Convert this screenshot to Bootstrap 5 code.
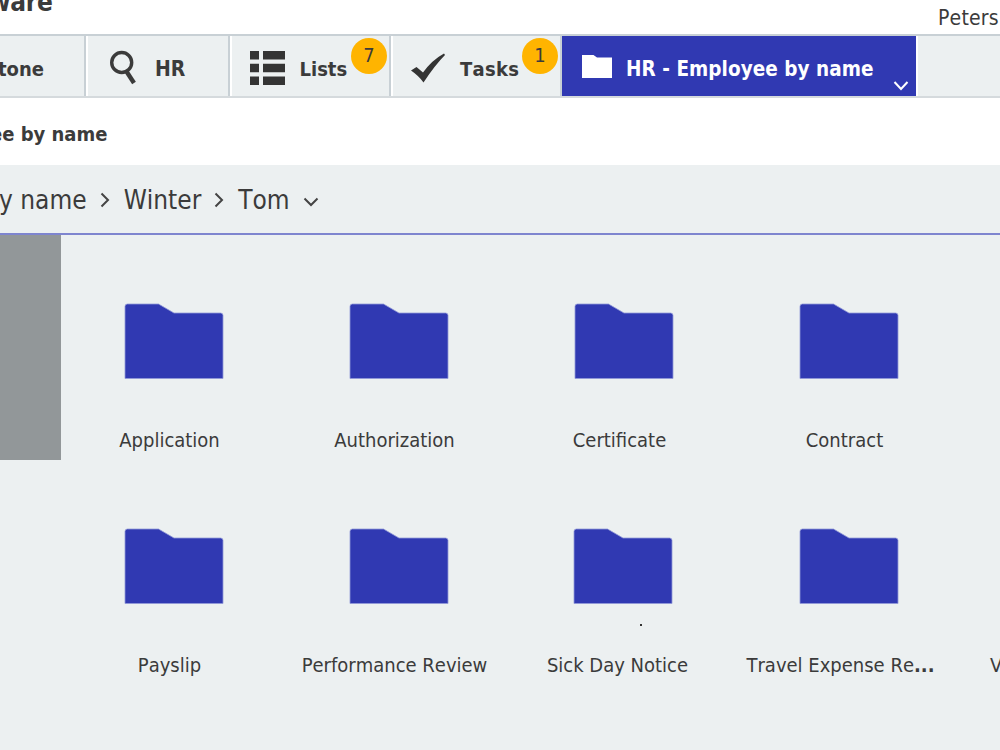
<!DOCTYPE html>
<html lang="en">
<head>
<meta charset="utf-8">
<title>HR - Employee by name</title>
<link href="https://cdn.jsdelivr.net/npm/bootstrap@5.3.0/dist/css/bootstrap.min.css" rel="stylesheet">
<style>
body{width:1000px;height:750px;overflow:hidden;background:#ecf0f1;color:#3b3b3b;font-family:"DejaVu Sans Condensed","DejaVu Sans",sans-serif;font-stretch:condensed;font-kerning:none;font-size:20px;line-height:24px;white-space:nowrap}
.masthead{height:36px;border-bottom:2px solid #c8d0d5}
.brand{font-size:26px;font-weight:700;margin:-10px 0 0 -11px;letter-spacing:-.3px}
.user{margin:6px 0 0;font-size:21px;width:62px;letter-spacing:.2px}
.tabs{height:62px;border-bottom:2px solid #d5dadd}
.tab{height:60px;border-right:2px solid #c8d0d5;border-left:2px solid #fff;font-weight:700}
.tab svg,.tile svg,.path svg{display:block;flex:none}
.tab .t,.tab-on .t{position:relative;top:3px}
.tab-on .t{font-size:20.500px;letter-spacing:.05px}
.count{position:absolute;right:2px;top:2px;width:36px;height:36px;line-height:35px;border-radius:50%;background:#ffb400;font-weight:400;text-align:center}
.tab-on{background:#3039b2;color:#fff;width:354px;height:60px;font-weight:700}
.page-title{height:67px;font-weight:700;padding-top:24px}
.path{height:70px;border-bottom:2px solid #7e85cf;font-size:26px;line-height:32px}
.path span{padding-top:2px}
.side{width:61px;height:225px;background:#929799;flex:none}
.tiles{display:grid;grid-template-columns:repeat(4,225px) 1fr;grid-auto-rows:225px;margin-left:-4px;width:943px;overflow:hidden}
.tile{position:relative;padding-top:68px}
.tile svg{margin:0 0 49px 67px}
.tile .t{width:225px;text-align:center}
.speck{position:absolute;left:133px;top:164px;width:2px;height:2px;background:#333}
</style>
</head>
<body>
<svg width="0" height="0" class="position-absolute"><defs>
<symbol id="folder" viewBox="0 0 100 76"><path d="M1 75.500V3.500Q1 1 3.500 1H34.500L50 10H96.500Q99 10 99 12.500V75.500Z" fill="#3039b2" stroke="#9299d8" stroke-width=".8"/></symbol>
</defs></svg>
<header class="masthead bg-white d-flex justify-content-between">
<div class="brand">ware</div><div class="user">Peters</div>
</header>
<nav class="tabs d-flex">
<div class="tab d-flex align-items-center border-start-0" style="width:86px"><span class="t" style="margin-left:-2px">tone</span></div>
<div class="tab d-flex align-items-center" style="width:144px">
<svg width="30" height="36" style="margin:2px 0 0 20px" viewBox="0 0 30 36" fill="none" stroke="#3b3b3b"><circle cx="13.700" cy="13.500" r="10" stroke-width="3.400"/><path d="M18.500 22.500L26 34" stroke-width="4.400"/></svg>
<span class="t" style="margin-left:17px;font-size:21px">HR</span></div>
<div class="tab d-flex align-items-center position-relative" style="width:161px">
<svg width="35" height="34" style="margin:4px 0 0 17.500px" viewBox="0 0 35 34" fill="#343434"><path d="M0 0h9v8.500H0zM13 0h22v8.500H13zM0 12.700h9v8.500H0zM13 12.700h22v8.500H13zM0 25.400h9v8.500H0zM13 25.400h22v8.500H13z"/></svg>
<span class="t" style="margin-left:15px">Lists</span><span class="count">7</span></div>
<div class="tab d-flex align-items-center position-relative" style="width:171px">
<svg width="35" height="30" style="margin:4px 0 0 18px" viewBox="0 0 35 30" fill="#343434"><path d="M0 17.500L5.500 14L12 19.500Q21 7 33 .5L34 2Q24 12 12.500 29.500Q8 23 0 17.500Z"/></svg>
<span class="t" style="margin-left:14px;letter-spacing:.3px">Tasks</span><span class="count">1</span></div>
<div class="tab-on d-flex align-items-center position-relative">
<svg width="30" height="23" style="margin:1px 0 0 20px" viewBox="0 0 30 23" fill="#fff"><path d="M0 0H11.500L15 2.500H30V23H0Z"/></svg>
<span class="t" style="margin-left:14px">HR - Employee by name</span>
<svg class="position-absolute" style="right:7px;bottom:4px" width="16" height="12" viewBox="0 0 16 12" fill="none" stroke="#fff" stroke-width="2"><path d="M1.500 2L8 9L14.500 2"/></svg></div>
<div class="tab flex-grow-1 border-end-0"></div>
</nav>
<div class="page-title bg-white"><span style="margin-left:-10px">ee by name</span></div>
<div class="path d-flex align-items-center">
<span style="margin-left:-1px">y name</span>
<svg width="10" height="16" style="margin:2px 0 0 13px" viewBox="0 0 10 16" fill="none" stroke="#444" stroke-width="2"><path d="M1.500 1.500L8 8L1.500 14.500"/></svg>
<span style="margin-left:14px">Winter</span>
<svg width="10" height="16" style="margin:2px 0 0 13px" viewBox="0 0 10 16" fill="none" stroke="#444" stroke-width="2"><path d="M1.500 1.500L8 8L1.500 14.500"/></svg>
<span style="margin-left:14px">Tom</span>
<svg width="16" height="10" style="margin:5px 0 0 13px" viewBox="0 0 16 10" fill="none" stroke="#444" stroke-width="2"><path d="M1.500 1.500L8 8L14.500 1.500"/></svg>
</div>
<main class="d-flex">
<div class="side"></div>
<div class="tiles">
<div class="tile"><svg width="100" height="76"><use href="#folder"/></svg><div class="t">Application</div></div>
<div class="tile"><svg width="100" height="76"><use href="#folder"/></svg><div class="t">Authorization</div></div>
<div class="tile"><svg width="100" height="76"><use href="#folder"/></svg><div class="t">Certificate</div></div>
<div class="tile"><svg width="100" height="76"><use href="#folder"/></svg><div class="t">Contract</div></div>
<div></div>
<div class="tile"><svg width="100" height="76"><use href="#folder"/></svg><div class="t">Payslip</div></div>
<div class="tile"><svg width="100" height="76"><use href="#folder"/></svg><div class="t">Performance Review</div></div>
<div class="tile"><svg width="100" height="76" style="margin-left:66px"><use href="#folder"/></svg><i class="speck"></i><div class="t pe-1">Sick Day Notice</div></div>
<div class="tile"><svg width="100" height="76"><use href="#folder"/></svg><div class="t pe-2">Travel Expense Re<b>...</b></div></div>
<div class="tile"><div style="margin:125px 0 0 33px">V</div></div>
</div>
</main>
<script src="https://cdn.jsdelivr.net/npm/bootstrap@5.3.0/dist/js/bootstrap.bundle.min.js"></script>
</body>
</html>
